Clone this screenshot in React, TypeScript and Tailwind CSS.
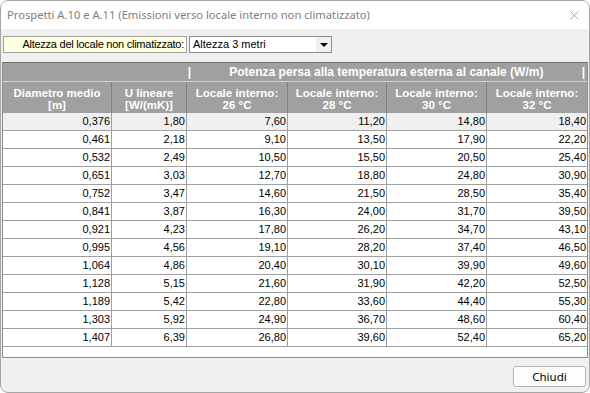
import { X } from 'lucide-react'

const rows = [
  ['0,376', '1,80', '7,60', '11,20', '14,80', '18,40'],
  ['0,461', '2,18', '9,10', '13,50', '17,90', '22,20'],
  ['0,532', '2,49', '10,50', '15,50', '20,50', '25,40'],
  ['0,651', '3,03', '12,70', '18,80', '24,80', '30,90'],
  ['0,752', '3,47', '14,60', '21,50', '28,50', '35,40'],
  ['0,841', '3,87', '16,30', '24,00', '31,70', '39,50'],
  ['0,921', '4,23', '17,80', '26,20', '34,70', '43,10'],
  ['0,995', '4,56', '19,10', '28,20', '37,40', '46,50'],
  ['1,064', '4,86', '20,40', '30,10', '39,90', '49,60'],
  ['1,128', '5,15', '21,60', '31,90', '42,20', '52,50'],
  ['1,189', '5,42', '22,80', '33,60', '44,40', '55,30'],
  ['1,303', '5,92', '24,90', '36,70', '48,60', '60,40'],
  ['1,407', '6,39', '26,80', '39,60', '52,40', '65,20'],
]

const headers = [
  ['Diametro medio', '[m]'],
  ['U lineare', '[W/(mK)]'],
  ['Locale interno:', '26 °C'],
  ['Locale interno:', '28 °C'],
  ['Locale interno:', '30 °C'],
  ['Locale interno:', '32 °C'],
]

const cols = 'grid grid-cols-[109px_75px_101px_99px_100px_101px]'

export default function App() {
  return (
    <div className="h-[393px] w-[590px] overflow-hidden bg-white font-['Liberation_Sans',sans-serif]">
      <div className="flex h-full flex-col overflow-hidden rounded-[8px] border border-[#a6a6a6] bg-[#f0f0f0]">
        {/* title bar */}
        <div className="flex h-[28px] shrink-0 items-center justify-between bg-white pl-[6px] pr-[7px]">
          <span className="font-['Noto_Sans',sans-serif] text-[11.2px] text-[#808080]">
            Prospetti A.10 e A.11 (Emissioni verso locale interno non climatizzato)
          </span>
          <X className="h-[15px] w-[15px] text-[#7a7a7a]" strokeWidth={1} />
        </div>

        {/* filter */}
        <div className="flex h-[33px] shrink-0 items-start gap-[2px] pl-[2px] pt-[7px] text-[11px] text-black">
          <div className="flex h-[17px] w-[184px] items-center justify-end border border-[#a0a0a0] bg-[#ffffe1] pr-[2px] tracking-[-0.25px]">
            Altezza del locale non climatizzato:
          </div>
          <div className="flex h-[17px] w-[143px] items-center border border-[#8c8c8c] bg-white">
            <span className="flex-1 pl-[3px]">Altezza 3 metri</span>
            <div className="flex h-full w-[15px] items-center justify-center bg-[#f0f0f0]">
              <div className="h-0 w-0 border-x-[4px] border-t-[4px] border-x-transparent border-t-black" />
            </div>
          </div>
        </div>

        {/* grid */}
        <div className="mx-px h-[296px] shrink-0 overflow-hidden border border-[#8c8c8c] border-t-[#707070] bg-white">
          <div className="bg-[#a0a0a0] font-bold text-white">
            <div className="flex h-[19px] border-b border-[#d4d4d4] text-[12px]">
              <div className="w-[184px]" />
              <div className="flex w-[401px] items-center justify-between pl-[1px] pr-[2px]">
                <span>|</span>
                <span>Potenza persa alla temperatura esterna al canale (W/m)</span>
                <span>|</span>
              </div>
            </div>
            <div className={`${cols} h-[31px] text-[11.5px] leading-[12px]`}>
              {headers.map(([a, b]) => (
                <div key={a + b} className="flex flex-col items-center justify-center border-r border-[#808080] pt-[3px]">
                  <span>{a}</span>
                  <span>{b}</span>
                </div>
              ))}
            </div>
          </div>
          {rows.map((row, i) => (
            <div
              key={row[0]}
              className={`${cols} h-[18px] border-b border-[#a0a0a0] text-[11px] text-black ${i === 0 ? 'bg-[#f0f0f0]' : 'bg-white'}`}
            >
              {row.map((v, j) => (
                <div key={j} className="flex items-center justify-end border-r border-[#a0a0a0] pr-[1px]">
                  {v}
                </div>
              ))}
            </div>
          ))}
        </div>

        {/* footer */}
        <div className="flex flex-1 items-start justify-end pr-[3px] pt-[8px]">
          <button
            type="button"
            className="flex h-[21px] w-[73px] items-center justify-center rounded-[3px] border border-[#b4b4b4] bg-[#fdfdfd] font-['Noto_Sans',sans-serif] text-[11.5px] text-black"
          >
            Chiudi
          </button>
        </div>
      </div>
    </div>
  )
}
